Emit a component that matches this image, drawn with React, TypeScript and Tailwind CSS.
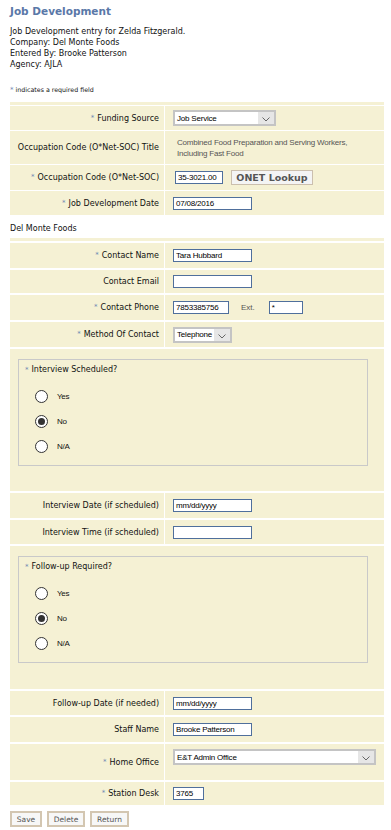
import type { ReactNode } from "react";

// Cream form table rows with white gutters, like the legacy case-management screen.
const CELL = "bg-[#f5f1d4]";

function Req() {
  return <span className="mr-[3px] text-[7px] text-[#6b86b3]">*</span>;
}

function Row({ label, req, h, children, top }: { label: string; req?: boolean; h: number; children?: ReactNode; top?: boolean }) {
  return (
    <div className="flex gap-px" style={{ height: h }}>
      <div className={`${CELL} flex w-[154px] shrink-0 items-center justify-end pr-[5px] text-right`}>
        {req && <Req />}
        <span>{label}</span>
      </div>
      <div className={`${CELL} flex flex-1 pl-[8px] ${top ? "items-start pt-[5px]" : "items-center"}`}>{children}</div>
    </div>
  );
}

function TextBox({ w, value }: { w: number; value?: string }) {
  return (
    <div
      className="flex h-[13px] items-center border border-[#4f6f9c] bg-white px-[2px] font-['Liberation_Sans',Arial,sans-serif] text-[8px] tracking-[-0.2px] text-black"
      style={{ width: w }}
    >
      {value}
    </div>
  );
}

function Select({ w, value }: { w: number; value: string }) {
  return (
    <div className="flex h-[16px] border-2 border-[#c4c4c4] bg-white" style={{ width: w }}>
      <div className="flex flex-1 items-center px-[2px] font-['Liberation_Sans',Arial,sans-serif] text-[8px] tracking-[-0.2px] text-black">{value}</div>
      <div className="flex w-[16px] items-end justify-center bg-[#e6e6e6] pb-[2px]">
        <svg width="8" height="5" viewBox="0 0 8 5">
          <path d="M0.5 0.5 L4 4 L7.5 0.5" fill="none" stroke="#666" strokeWidth="1" />
        </svg>
      </div>
    </div>
  );
}

function Radio({ checked, label }: { checked?: boolean; label: string }) {
  return (
    <div className="flex items-center">
      <div className="flex h-[13px] w-[13px] items-center justify-center rounded-full border border-[#333] bg-white">
        {checked && <div className="h-[7px] w-[7px] rounded-full bg-[#333]" />}
      </div>
      <span className="ml-[9px] font-['Liberation_Sans',Arial,sans-serif] text-[8px] tracking-[-0.3px]">{label}</span>
    </div>
  );
}

function RadioGroup({ label, h }: { label: string; h: number }) {
  return (
    <div className={`${CELL} pl-[8px] pr-[16px] pt-[10px]`} style={{ height: h }}>
      <div className="h-[107px] border border-[#c9c9c9] pl-[6px] pt-[4px]">
        <div>
          <Req />
          {label}
        </div>
        <div className="mt-[14px] flex flex-col gap-[12px] pl-[10px]">
          <Radio label="Yes" />
          <Radio label="No" checked />
          <Radio label="N/A" />
        </div>
      </div>
    </div>
  );
}

function Btn({ children, w }: { children: ReactNode; w: number }) {
  return (
    <div
      className="flex h-[16px] items-center justify-center border-2 border-[#d3c6b1] bg-[#f7f7f7] text-[7.5px] text-[#555]"
      style={{ width: w }}
    >
      {children}
    </div>
  );
}

export default function App() {
  return (
    <div className="min-h-[830px] w-[391px] bg-white pl-[10px] pr-[7px] pt-[3px] font-['DejaVu_Sans',Verdana,sans-serif] text-[8px] leading-[11px] text-[#111]">
      <h1 className="text-[10.5px] font-bold leading-[16px] text-[#5a78a8]">Job Development</h1>
      <div className="mt-[7px]">
        <p>Job Development entry for Zelda Fitzgerald.</p>
        <p>Company: Del Monte Foods</p>
        <p>Entered By: Brooke Patterson</p>
        <p>Agency: AJLA</p>
      </div>
      <p className="mt-[14px] text-[6.3px]">
        <span className="text-[7px] text-[#6b86b3]">*</span> indicates a required field
      </p>

      <div className="mt-[6px] flex flex-col gap-px bg-white">
        <div className={`${CELL} h-[3px]`} />
        <Row label="Funding Source" req h={24}>
          <Select w={103} value="Job Service" />
        </Row>
        <Row label="Occupation Code (O*Net-SOC) Title" h={33}>
          <p className="pl-[4px] font-['Liberation_Sans',Arial,sans-serif] text-[8px] leading-[11px] tracking-[-0.2px] text-[#555]">
            Combined Food Preparation and Serving Workers,
            <br />
            Including Fast Food
          </p>
        </Row>
        <Row label="Occupation Code (O*Net-SOC)" req h={25}>
          <div className="pl-[2px]">
            <TextBox w={48} value="35-3021.00" />
          </div>
          <div className="ml-[8px] flex h-[15px] w-[82px] items-center justify-center border border-[#cbbfae] bg-[#f4f4f4] text-[9.5px] font-bold text-[#555]">
            ONET Lookup
          </div>
        </Row>
        <Row label="Job Development Date" req h={24}>
          <TextBox w={79} value="07/08/2016" />
        </Row>
      </div>

      <p className="mt-[8px]">Del Monte Foods</p>

      <div className="mt-[4px] flex flex-col gap-[2px] bg-white">
        <div className={`${CELL} h-[3px]`} />
        <Row label="Contact Name" req h={25}>
          <TextBox w={79} value="Tara Hubbard" />
        </Row>
        <Row label="Contact Email" h={23}>
          <TextBox w={79} />
        </Row>
        <Row label="Contact Phone" req h={25}>
          <TextBox w={56} value="7853385756" />
          <span className="ml-[12px] font-['Liberation_Sans',Arial,sans-serif] text-[8px] text-[#555]">Ext.</span>
          <div className="ml-[14px]">
            <TextBox w={34} value="*" />
          </div>
        </Row>
        <Row label="Method Of Contact" req h={25}>
          <Select w={59} value="Telephone" />
        </Row>
        <RadioGroup label="Interview Scheduled?" h={142} />
        <Row label="Interview Date (if scheduled)" h={25}>
          <TextBox w={79} value="mm/dd/yyyy" />
        </Row>
        <Row label="Interview Time (if scheduled)" h={24}>
          <TextBox w={79} />
        </Row>
        <RadioGroup label="Follow-up Required?" h={143} />
        <Row label="Follow-up Date (if needed)" h={24}>
          <TextBox w={79} value="mm/dd/yyyy" />
        </Row>
        <Row label="Staff Name" h={25}>
          <TextBox w={79} value="Brooke Patterson" />
        </Row>
        <Row label="Home Office" req h={36} top>
          <Select w={203} value="E&T Admin Office" />
        </Row>
        <Row label="Station Desk" req h={23}>
          <TextBox w={31} value="3765" />
        </Row>
      </div>

      <div className="mt-[6px] flex gap-[5px]">
        <Btn w={32}>Save</Btn>
        <Btn w={38}>Delete</Btn>
        <Btn w={39}>Return</Btn>
      </div>
    </div>
  );
}
